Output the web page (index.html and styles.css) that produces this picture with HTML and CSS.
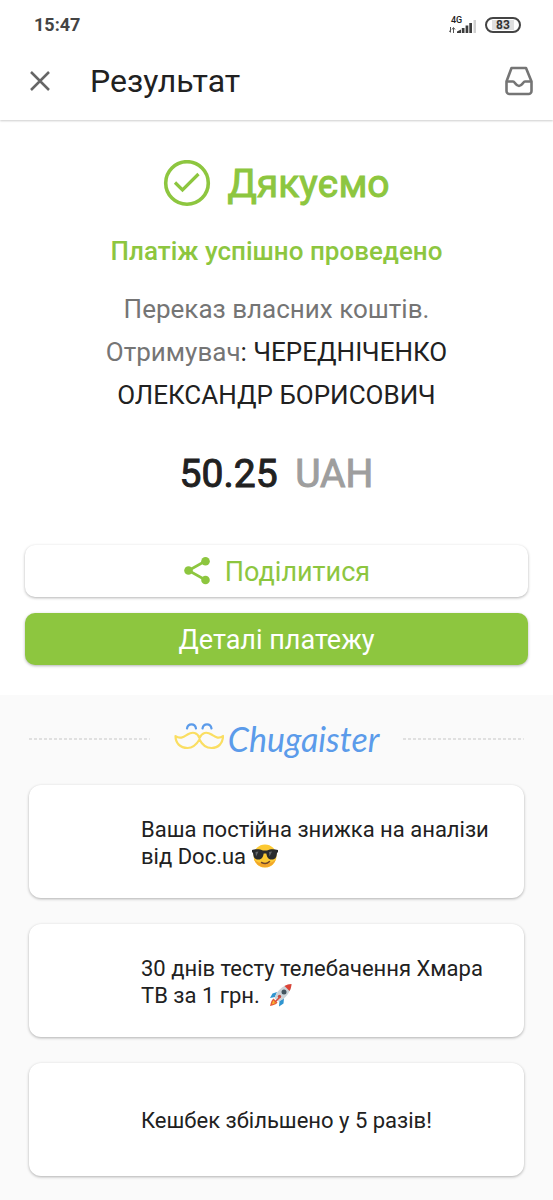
FILE: index.html
```html
<!DOCTYPE html>
<html lang="uk">
<head>
<meta charset="utf-8">
<meta name="viewport" content="width=device-width, initial-scale=1">
<title>Результат</title>
<link rel="stylesheet" href="styles.css">
</head>
<body>
<header class="top">
  <div class="status">
    <time class="clock">15:47</time>
    <div class="indicators">
      <div class="network">
        <span class="network-type">4G</span>
        <svg class="signal" width="28" height="14" viewBox="0 0 28 14" aria-hidden="true">
          <path d="M1.500 7v5M0 10.500l1.500 2M4.500 13V8M3 9.500l1.500-2 1.500 2" fill="none" stroke="#555" stroke-width="1"/>
          <path d="M8 13v-1.500l4-2V13zM12.800 8h2.700v5h-2.700zM16.600 5.500h2.700V13h-2.700zM20.300 3h2.700v10h-2.700z" fill="#3d3d3d"/>
          <path d="M24.500 0H27v13h-2.500z" fill="#d0d0d0"/>
        </svg>
      </div>
      <div class="battery"><span class="battery-level">83</span></div>
    </div>
  </div>
  <div class="bar">
    <button class="icon-button" type="button" aria-label="Закрити">
      <svg width="20" height="20" viewBox="0 0 20 20"><path d="M1 1l18 18M19 1L1 19" fill="none" stroke="#666" stroke-width="2.500"/></svg>
    </button>
    <h1 class="title">Результат</h1>
    <button class="icon-button" type="button" aria-label="Архів">
      <svg width="30" height="30" viewBox="0 0 30 30" fill="none" stroke="#757575" stroke-width="2.600" stroke-linejoin="round">
        <path d="M7.500 2h14.500l5.500 13.500V25a3 3 0 0 1-3 3h-19a3 3 0 0 1-3-3v-9.500z"/>
        <path d="M2.500 15.500h6.500c2 0 2.500 4.500 6 4.500s4-4.500 6-4.500h6.500"/>
      </svg>
    </button>
  </div>
</header>
<main>
  <section class="result">
    <div class="thanks">
      <svg width="48" height="48" viewBox="0 0 48 48" fill="none" stroke="#8dc63f" aria-hidden="true">
        <circle cx="24" cy="23" r="21.300" stroke-width="3.600"/>
        <path d="M12 22.500l7.500 7.500L35.500 14" stroke-width="3.200"/>
      </svg>
      <h2 class="thanks-text">Дякуємо</h2>
    </div>
    <p class="success">Платіж успішно проведено</p>
    <p class="details">Переказ власних коштів.</p>
    <p class="details"><span>Отримувач</span><span class="recipient">: ЧЕРЕДНІЧЕНКО</span> <span class="recipient">ОЛЕКСАНДР БОРИСОВИЧ</span></p>
    <p class="amount">50.25 <span class="currency">UAH</span></p>
    <div class="actions">
      <button class="button" type="button">
        <svg width="28" height="30" viewBox="0 0 28 30" aria-hidden="true">
          <path d="M22.500 4L5.500 13.500l17 9.500" fill="none" stroke="#8dc63f" stroke-width="2.600"/>
          <g fill="#8dc63f"><circle cx="22.500" cy="4.300" r="4.300"/><circle cx="5.500" cy="13.500" r="4.300"/><circle cx="22.500" cy="23" r="4.300"/></g>
        </svg>
        Поділитися
      </button>
      <button class="button button-primary" type="button">Деталі платежу</button>
    </div>
  </section>
  <section class="offers">
    <div class="brand">
      <svg class="dots" width="100%" height="2" aria-hidden="true"><line x1="0" y1="1" x2="100%" y2="1" stroke="#d8d8d8" stroke-width="1.500" stroke-dasharray="3 2"/></svg>
      <div class="logo">
        <svg width="50" height="32" viewBox="0 0 50 32" fill="none" stroke-linecap="round" stroke-linejoin="round" aria-hidden="true">
          <path d="M13 5.500c1-5.500 8-5.500 9 0M28.500 5.500c1-5.500 8-5.500 9 0" stroke="#5b9bea" stroke-width="2.200"/>
          <path d="M1.500 13c4.500 3.500 8 1 12-1.500 5-3.200 10-2 12 3.500 2.500-5.500 7-6.700 12-3.500 4 2.500 7 5 11.500 1.500 0 7-4.500 12-11.500 12-6 0-9.500-3.500-12-8.500-3 5-6 8.500-12 8.500C6 25 1.500 20 1.500 13z" stroke="#fade62" stroke-width="2.200"/>
        </svg>
        <span class="brand-name">Chugaister</span>
      </div>
      <svg class="dots" width="100%" height="2" aria-hidden="true"><line x1="0" y1="1" x2="100%" y2="1" stroke="#d8d8d8" stroke-width="1.500" stroke-dasharray="3 2"/></svg>
    </div>
    <a class="card" href="#doc"><span>Ваша постійна знижка на аналізи від Doc.ua
      <svg class="emoji" width="26" height="24" viewBox="0 0 26 24" role="img" aria-label="Смайлик в окулярах">
        <circle cx="13" cy="12" r="11.500" fill="#fcc932"/>
        <path d="M2 15a11.500 11.500 0 0 0 22 0c-4 6-18 6-22 0z" fill="#f2a52b"/>
        <path d="M0 6c4-1.200 8-1 11 0.500h4C18 5 22 4.800 26 6v2l-1 1c-0.500 5-2 6.500-5.500 6.500S15 13 14.300 9.500h-2.600C11 13 10 15.500 6.500 15.500S1.500 14 1 9L0 8z" fill="#292b2d"/>
        <path d="M3.500 8l3-0.500-2.500 5zM17 8l3-0.500-2.500 5z" fill="#65696c"/>
        <path d="M9.500 18.500c3 1.500 6 1 8-1" fill="none" stroke="#70452a" stroke-width="1.500" stroke-linecap="round"/>
      </svg></span></a>
    <a class="card" href="#tv"><span>30 днів тесту телебачення Хмара ТВ за 1 грн.
      <svg class="emoji rocket" width="24" height="24" viewBox="0 0 24 24" role="img" aria-label="Ракета">
        <path d="M8 9L3.500 10.500 1 15l5-1zM15 15l-0.500 5.500-4.500 3 0.500-5.500z" fill="#2f95d0"/>
        <path d="M4.500 15.500C2 17 2 20 1 23c3-1 6-1 7.500-3.500z" fill="#e65b39"/>
        <path d="M4.700 17.500C3.500 18.500 3.500 20 3 21.200c1.500-0.500 3-0.500 3.700-1.700z" fill="#fbc02d"/>
        <path d="M5.500 15c1.500-6 7.500-13 17-14-0.500 9-7.500 16-13.500 17.500z" fill="#cbd3d8"/>
        <path d="M15.500 3c2-1.200 4.500-1.900 7-2-0.100 2.500-0.800 5-2 7z" fill="#dc4437"/>
        <circle cx="15" cy="9" r="2.500" fill="#43545f"/><circle cx="10.500" cy="13.500" r="1.700" fill="#b94d45"/>
        <path d="M11 13l-5 5-1.500 2 3-1.500 4.500-4.500z" fill="#d94b3d"/>
      </svg></span></a>
    <a class="card" href="#cashback"><span>Кешбек збільшено у 5 разів!</span></a>
  </section>
</main>
</body>
</html>
```
FILE: styles.css
```css
* { box-sizing: border-box; }
body {
  margin: 0;
  background: #fafafa;
  color: #212121;
  font-family: Roboto, "Noto Sans", sans-serif;
}
h1, h2, p { margin: 0; }
button { font: inherit; border: 0; cursor: pointer; }
svg { display: block; flex: none; }

.top {
  position: relative;
  background: #fff;
  box-shadow: 0 1px 2px rgba(0, 0, 0, 0.2);
}
.status {
  display: flex;
  justify-content: space-between;
  align-items: center;
  height: 42px;
  padding: 8px 32px 0 34px;
}
.clock { color: #444; font-size: 18px; font-weight: 700; line-height: 24px; }
.indicators { display: flex; align-items: center; gap: 8px; }
.network { display: flex; flex-direction: column; }
.network-type { padding-left: 2px; margin-bottom: -4px; font-size: 9px; font-weight: 500; line-height: 8px; }
.battery {
  display: flex;
  justify-content: center;
  width: 36px;
  height: 16px;
  padding: 1px;
  border: 2px solid #444;
  border-radius: 8px;
}
.battery-level {
  padding: 0 4px;
  background: #e0e0e0;
  color: #333;
  font-size: 12px;
  font-weight: 700;
  line-height: 10px;
}
.bar {
  display: flex;
  align-items: center;
  height: 78px;
  padding: 0 19px 0 30px;
}
.icon-button { padding: 0; background: none; }
.title { flex: 1; margin-left: 40px; font-size: 32px; font-weight: 400; line-height: 42px; }

.result {
  padding: 36px 25px 30px;
  background: #fff;
  text-align: center;
}
.thanks {
  display: flex;
  align-items: center;
  justify-content: center;
  gap: 16px;
  color: #8dc63f;
}
.thanks-text {
  font-size: 39px;
  font-weight: 400;
  line-height: 56px;
  -webkit-text-stroke: 1px currentColor;
}
.success { margin: 22px 0 20px; color: #8dc63f; font-size: 26px; font-weight: 500; line-height: 34px; }
.details { padding: 0 64px; color: #757575; font-size: 26px; line-height: 43px; }
.recipient { color: #212121; }
.amount {
  margin-top: 31px;
  font-size: 39px;
  font-weight: 400;
  line-height: 52px;
  -webkit-text-stroke: 1px currentColor;
}
.currency { margin-left: 8px; color: #9e9e9e; }
.actions { display: grid; gap: 16px; margin-top: 45px; }
.button {
  display: flex;
  align-items: center;
  justify-content: center;
  gap: 14px;
  height: 52px;
  padding: 2px 0 0;
  border-radius: 10px;
  background: #fff;
  box-shadow: 0 1px 3px rgba(0, 0, 0, 0.3);
  color: #8dc63f;
  font-size: 27px;
}
.button-primary { background: #8dc63f; color: #fff; }

.offers { display: grid; gap: 26px; padding: 20px 29px 24px; }
.brand { display: flex; align-items: center; gap: 24px; height: 44px; padding-top: 4px; }
.dots { flex: 1; min-width: 0; }
.logo { display: flex; align-items: center; gap: 4px; }
.brand-name { color: #5b9bea; font-family: Lato, sans-serif; font-size: 34px; font-style: italic; line-height: 40px; }
.card {
  display: flex;
  align-items: center;
  min-height: 113px;
  padding: 18px 24px 16px 112px;
  border-radius: 12px;
  background: #fff;
  box-shadow: 0 1px 3px rgba(0, 0, 0, 0.3);
  color: #212121;
  font-size: 22px;
  line-height: 27px;
  text-decoration: none;
}
.emoji { display: inline-block; vertical-align: -4px; }
.rocket { margin-left: 4px; }
```
